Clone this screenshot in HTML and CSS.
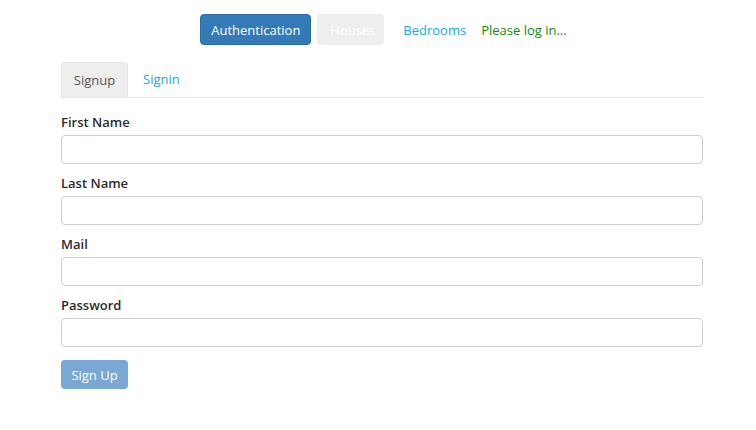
FILE: index.html
```html
<!DOCTYPE html>
<html>
<head>
<meta charset="utf-8">
<link rel="stylesheet" href="styles.css">
</head>
<body>
<nav class="topnav">
  <button class="btn btn-primary">Authentication</button>
  <button class="btn btn-muted">Houses</button>
  <a class="navlink">Bedrooms</a>
  <span class="status">Please log in...</span>
</nav>
<main class="container">
  <ul class="tabs">
    <li class="tab active">Signup</li>
    <li class="tab">Signin</li>
  </ul>
  <form class="form">
    <div class="group">
      <label>First Name</label>
      <input type="text">
    </div>
    <div class="group">
      <label>Last Name</label>
      <input type="text">
    </div>
    <div class="group">
      <label>Mail</label>
      <input type="text">
    </div>
    <div class="group">
      <label>Password</label>
      <input type="password">
    </div>
    <button type="button" class="btn btn-disabled">Sign Up</button>
  </form>
</main>
</body>
</html>
```
FILE: styles.css
```css
* { box-sizing: border-box; }
body {
  margin: 0;
  font-family: "Open Sans", "Helvetica Neue", Arial, sans-serif;
  font-size: 13px;
  color: #333;
  background: #fff;
}
.topnav {
  display: flex;
  align-items: center;
  justify-content: center;
  padding: 14px 0 0 11px;
  gap: 6px;
  height: 45px;
}
.btn {
  font-family: inherit;
  font-size: 13px;
  border: 1px solid transparent;
  border-radius: 4px;
  height: 31px;
  padding: 0 12px;
  cursor: pointer;
  font-weight: 500;
}
.btn-primary {
  background: #337ab7;
  border-color: #2e6da4;
  color: #fff;
  width: 111px;
  padding: 0;
}
.btn-muted {
  background: #eeeeee;
  color: #fff;
  width: 67px;
  margin-right: 13px;
}
.navlink {
  color: #12a9e8;
  margin-right: 9px;
}
.status {
  color: #128a12;
}
.container {
  margin: 17px 0 0 61px;
  width: 642px;
}
.tabs {
  list-style: none;
  margin: 0;
  padding: 0;
  display: flex;
  border-bottom: 1px solid #e6e6e6;
  height: 36px;
}
.tab {
  padding: 0 15px;
  line-height: 35px;
  color: #12a9e8;
}
.tab.active {
  background: #eeeeee;
  color: #555;
  border-radius: 4px 4px 0 0;
  border: 1px solid #e3e3e3;
  border-bottom: none;
  width: 67px;
  text-align: center;
  padding: 0;
}
.form {
  padding-top: 15px;
}
.group {
  display: flex;
  flex-direction: column;
  margin-bottom: 10px;
}
label {
  font-weight: 600;
  margin-bottom: 4px;
  line-height: 18px;
  color: #2b2b2b;
}
input {
  height: 29px;
  border: 1px solid #cfcfcf;
  border-radius: 4px;
  font-family: inherit;
  font-size: 13px;
  padding: 0 8px;
}
.btn-disabled {
  margin-top: 3px;
  background: #7aa7d3;
  color: #fff;
  width: 67px;
  height: 29px;
  padding: 0;
}
```
